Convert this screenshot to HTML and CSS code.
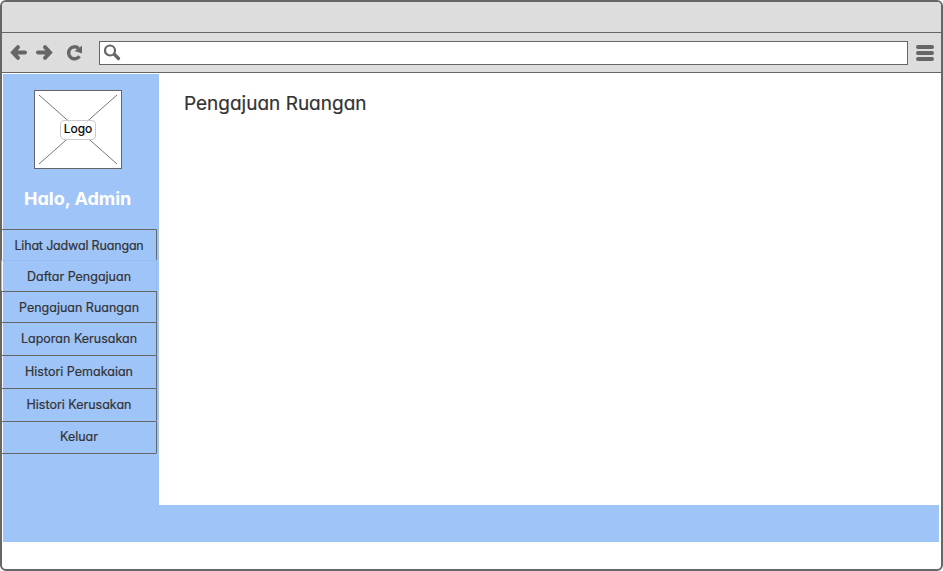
FILE: index.html
```html
<!DOCTYPE html>
<html lang="id">
<head>
<meta charset="utf-8">
<title>Pengajuan Ruangan</title>
<link rel="stylesheet" href="styles.css">
</head>
<body>
<div class="window">
  <div class="titlebar"></div>
  <div class="toolbar">
    <svg class="nav-icons" width="88" height="39" viewBox="0 0 88 39" fill="none" stroke="#666" stroke-width="4" stroke-linecap="round">
      <path d="M23 19.500H13M16 14.200L11 19.500L16 24.800"/>
      <path d="M36 19.500H46M43 14.200L48 19.500L43 24.800"/>
      <path d="M77.500 23.300A6 6 0 1 1 76.500 15.200" stroke-width="3.400" stroke-linecap="butt"/>
      <path d="M80 12.800V20.500L72.500 18Z" fill="#666" stroke="none"/>
    </svg>
    <div class="address">
      <svg width="20" height="20" viewBox="0 0 20 20" fill="none" stroke="#666">
        <circle cx="6" cy="7.500" r="5" stroke-width="2.200"/>
        <path d="M10.500 11.500L14.500 15.500" stroke-width="3.200" stroke-linecap="round"/>
      </svg>
    </div>
    <div class="burger"><i></i><i></i><i></i></div>
  </div>
  <div class="page">
    <div class="columns">
      <aside class="sidebar">
        <div class="logo">
          <svg width="86" height="77" viewBox="0 0 86 77" stroke="#777" stroke-width="1"><path d="M4 4L82 73M82 4L4 73"/></svg>
          <span>Logo</span>
        </div>
        <h2>Halo, Admin</h2>
        <nav class="menu">
          <a class="item first">Lihat Jadwal Ruangan</a>
          <a class="item active">Daftar Pengajuan</a>
          <a class="item short">Pengajuan Ruangan</a>
          <a class="item">Laporan Kerusakan</a>
          <a class="item">Histori Pemakaian</a>
          <a class="item">Histori Kerusakan</a>
          <a class="item last">Keluar</a>
        </nav>
      </aside>
      <main><h1>Pengajuan Ruangan</h1></main>
    </div>
    <footer></footer>
  </div>
</div>
</body>
</html>
```
FILE: styles.css
```css
* { box-sizing: border-box; }
body {
  margin: 0;
  background: #fff;
  color: #333;
  font-family: Inter, "Liberation Sans", sans-serif;
  font-feature-settings: "cv11";
}
.window {
  width: 943px;
  height: 571px;
  border: 2px solid #666;
  border-radius: 6px;
  background: #fff;
}
.titlebar {
  height: 31px;
  background: #ddd;
  border-bottom: 1px solid #666;
  border-radius: 4px 4px 0 0;
}
.toolbar {
  height: 40px;
  display: flex;
  align-items: center;
  background: #ddd;
  border-bottom: 1px solid #666;
}
.nav-icons { margin-right: 9px; }
.address {
  width: 809px;
  height: 24px;
  border: 1px solid #666;
  background: #fff;
  padding: 1px 0 0 4px;
}
.address svg { display: block; }
.burger {
  margin-left: 8px;
  display: flex;
  flex-direction: column;
  gap: 2px;
}
.burger i { width: 18px; height: 4px; border-radius: 2px; background: #666; }
.page { padding: 1px 2px 0 1px; }
.columns { display: flex; height: 431px; }
.sidebar { width: 156px; background: #9fc4f8; }
.logo {
  width: 88px;
  height: 79px;
  margin: 16px 0 0 31px;
  border: 1px solid #666;
  background: #fff;
  display: grid;
  place-items: center;
}
.logo > * { grid-area: 1 / 1; }
.logo span {
  width: 36px;
  height: 20px;
  z-index: 1;
  border: 1px solid #ccc;
  border-radius: 4px;
  background: rgba(255, 255, 255, .85);
  color: #000;
  font-size: 12px;
  line-height: 16px;
  text-align: center;
  -webkit-text-stroke: .2px #000;
}
h2 {
  margin: 17px 0 0 21px;
  height: 26px;
  color: #fff;
  font-size: 18px;
  font-weight: 700;
  line-height: 26px;
  white-space: nowrap;
}
.menu { width: 156px; margin: 17px 0 0 -2px; }
.item {
  display: block;
  height: 33px;
  padding-top: 1px;
  border: solid #666;
  border-width: 1px 1px 0;
  border-radius: 1px;
  font-size: 12.500px;
  line-height: 30px;
  text-align: center;
  white-space: nowrap;
  -webkit-text-stroke: .2px #333;
}
.first { height: 31px; letter-spacing: -.17px; }
.active { height: 31px; border-color: #94bdf5; line-height: 30px; }
.short { height: 31px; }
.last { border-bottom-width: 1px; line-height: 28px; }
h1 {
  margin: 16px 0 0 25px;
  font-size: 19px;
  font-weight: 400;
  line-height: 28px;
  -webkit-text-stroke: .2px #333;
}
footer { height: 37px; background: #9fc4f8; }
```
